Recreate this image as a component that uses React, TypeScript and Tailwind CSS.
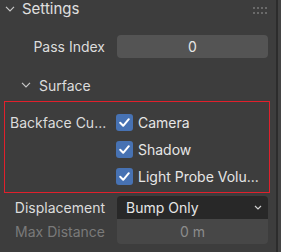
import React from "react";

const Chevron = ({ className = "" }: { className?: string }) => (
  <svg width="10" height="6" viewBox="0 0 10 6" className={className}>
    <path d="M1 0.8 L5 4.8 L9 0.8" fill="none" stroke="#c8c8c8" strokeWidth="1.2" />
  </svg>
);

const Check = () => (
  <div className="w-[17px] h-[17px] rounded-[3px] bg-[#4772b3] flex items-center justify-center">
    <svg width="13" height="13" viewBox="0 0 13 13">
      <path d="M2.2 6.8 L5.2 9.8 L10.8 3.2" fill="none" stroke="#ffffff" strokeWidth="2" strokeLinecap="round" strokeLinejoin="round" />
    </svg>
  </div>
);

export default function App() {
  return (
    <div
      className="w-[281px] h-[252px] bg-[#3d3d3d] flex overflow-hidden text-[14px] text-[#e0e0e0]"
      style={{ fontFamily: "Inter, 'Noto Sans', sans-serif" }}
    >
      <div className="w-[276px] flex flex-col">
        {/* header */}
        <div className="h-[18px] flex items-center relative">
          <Chevron className="ml-[5px]" />
          <span className="ml-[7px] text-[15px] text-[#e0e0e0]">Settings</span>
          <div className="absolute left-[253px] top-[7px] grid grid-cols-4 gap-x-[2px] gap-y-[3px]">
            {Array.from({ length: 8 }).map((_, i) => (
              <div key={i} className="w-[2px] h-[2px] bg-[#6a6a6a]" />
            ))}
          </div>
        </div>

        {/* Pass Index */}
        <div className="mt-[17px] h-[23px] flex items-center">
          <div className="w-[105px] text-right text-[#dcdcdc]">Pass Index</div>
          <div className="ml-[12px] w-[151px] h-[23px] rounded-[4px] bg-[#545454] flex items-center justify-center text-[#e6e6e6]">
            0
          </div>
        </div>

        {/* Surface */}
        <div className="mt-[17px] h-[20px] flex items-center">
          <Chevron className="ml-[21px]" />
          <span className="ml-[8px] text-[#dcdcdc]">Surface</span>
        </div>

        {/* Backface culling (highlighted) */}
        <div className="mt-[6px] ml-[4px] w-[266px] h-[92px] border border-[#e0202c] pt-[7px] flex flex-col">
          {[
            ["Backface Cu...", "Camera"],
            ["", "Shadow"],
            ["", "Light Probe Volu..."],
          ].map(([label, text], i) => (
            <div key={i} className="h-[27px] flex items-center">
              <div className="w-[111px] pl-[5px] text-[#dcdcdc] whitespace-nowrap">{label}</div>
              <Check />
              <span className="ml-[5px] text-[#e6e6e6] whitespace-nowrap">{text}</span>
            </div>
          ))}
        </div>

        {/* Displacement */}
        <div className="mt-[3px] h-[23px] flex items-center">
          <div className="w-[105px] text-right text-[#dcdcdc]">Displacement</div>
          <div className="ml-[12px] w-[151px] h-[23px] rounded-t-[4px] bg-[#282828] flex items-center pl-[9px] pr-[6px] text-[#e6e6e6]">
            <span className="flex-1">Bump Only</span>
            <svg width="8" height="5" viewBox="0 0 8 5">
              <path d="M1 1 L4 4 L7 1" fill="none" stroke="#d0d0d0" strokeWidth="1.2" />
            </svg>
          </div>
        </div>
        <div className="h-[25px] flex items-center">
          <div className="w-[105px] text-right text-[#7a7a7a]">Max Distance</div>
          <div className="ml-[12px] w-[151px] h-[25px] rounded-b-[4px] bg-[#474747] flex items-center justify-center text-[#8c8c8c]">
            0 m
          </div>
        </div>
      </div>
      <div className="w-[2px] bg-[#2c2c2c]" />
      <div className="w-[3px] bg-[#434343]" />
    </div>
  );
}
